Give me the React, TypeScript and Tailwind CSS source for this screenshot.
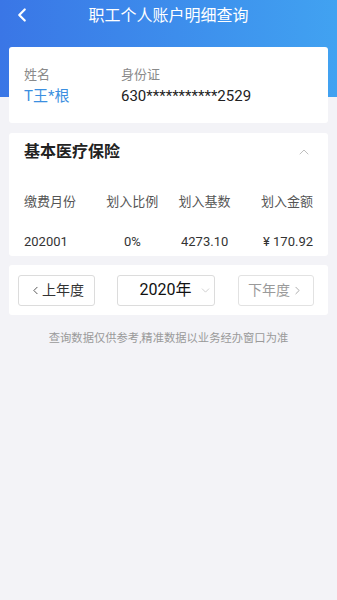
import { ChevronLeft, ChevronUp, ChevronDown, ChevronRight } from "lucide-react";

const font = { fontFamily: 'Roboto, "Noto Sans CJK SC", sans-serif' };

const cols = ["缴费月份", "划入比例", "划入基数", "划入金额"];
const row = ["202001", "0%", "4273.10", "¥ 170.92"];

export default function App() {
  return (
    <div className="min-h-[600px] w-full bg-[#f3f3f7]" style={font}>
      {/* header */}
      <div className="h-[97px] bg-gradient-to-r from-[#3a76e6] to-[#41a2f1]">
        <div className="relative flex h-[32px] items-center justify-center">
          <ChevronLeft className="absolute left-[11px] top-[4px] h-[22px] w-[22px] text-white" strokeWidth={2.4} />
          <h1 className="text-[16px] text-white">职工个人账户明细查询</h1>
        </div>
      </div>

      {/* person card */}
      <div className="mx-[9px] -mt-[50px] flex h-[76px] rounded-[3px] bg-white px-[15px] pt-[19px]">
        <div className="w-[97px]">
          <div className="text-[13px] leading-[18px] text-[#8a8a8a]">姓名</div>
          <div className="mt-[2px] text-[15px] leading-[20px] text-[#3b8fe0]">T王*根</div>
        </div>
        <div>
          <div className="text-[13px] leading-[18px] text-[#8a8a8a]">身份证</div>
          <div className="mt-[2px] text-[15px] leading-[20px] text-[#222]">630***********2529</div>
        </div>
      </div>

      {/* insurance card */}
      <div className="mx-[9px] mt-[10px] h-[123px] rounded-[3px] bg-white px-[15px]">
        <div className="flex h-[38px] items-center justify-between">
          <span className="text-[16px] font-bold text-[#222]">基本医疗保险</span>
          <ChevronUp className="mr-[1px] h-[16px] w-[16px] text-[#b5b5b5]" strokeWidth={1.3} />
        </div>
        <div className="mt-[22px] grid grid-cols-4 text-[13px] leading-[18px] text-[#555]">
          {cols.map((c, i) => (
            <div key={c} className={i === 0 ? "text-left" : i === 3 ? "text-right" : "text-center"}>
              {c}
            </div>
          ))}
        </div>
        <div className="mt-[22px] grid grid-cols-4 text-[13px] leading-[18px] text-[#333]">
          {row.map((c, i) => (
            <div key={i} className={i === 0 ? "text-left" : i === 3 ? "text-right" : "text-center"}>
              {c}
            </div>
          ))}
        </div>
      </div>

      {/* year switch */}
      <div className="mx-[9px] mt-[9px] flex h-[50px] items-center rounded-[3px] bg-white pl-[9px] pr-[14px]">
        <button className="flex h-[31px] w-[77px] items-center justify-center rounded-[3px] border border-[#dcdcdc] text-[14px] text-[#333]">
          <ChevronLeft className="h-[13px] w-[13px]" strokeWidth={1.5} />
          上年度
        </button>
        <button className="ml-[22px] flex h-[31px] w-[98px] items-center justify-center rounded-[3px] border border-[#dcdcdc] text-[16px] text-[#111]">
          <span className="ml-[20px]">2020年</span>
          <ChevronDown className="ml-[8px] h-[13px] w-[13px] text-[#c5c5c5]" strokeWidth={1.5} />
        </button>
        <button className="ml-auto flex h-[31px] w-[76px] items-center justify-center rounded-[3px] border border-[#e2e2e2] text-[14px] text-[#9a9a9a]">
          下年度
          <ChevronRight className="ml-[1px] h-[13px] w-[13px]" strokeWidth={1.5} />
        </button>
      </div>

      <p className="mt-[16px] text-center text-[11.3px] text-[#9a9a9a]">查询数据仅供参考,精准数据以业务经办窗口为准</p>
    </div>
  );
}
